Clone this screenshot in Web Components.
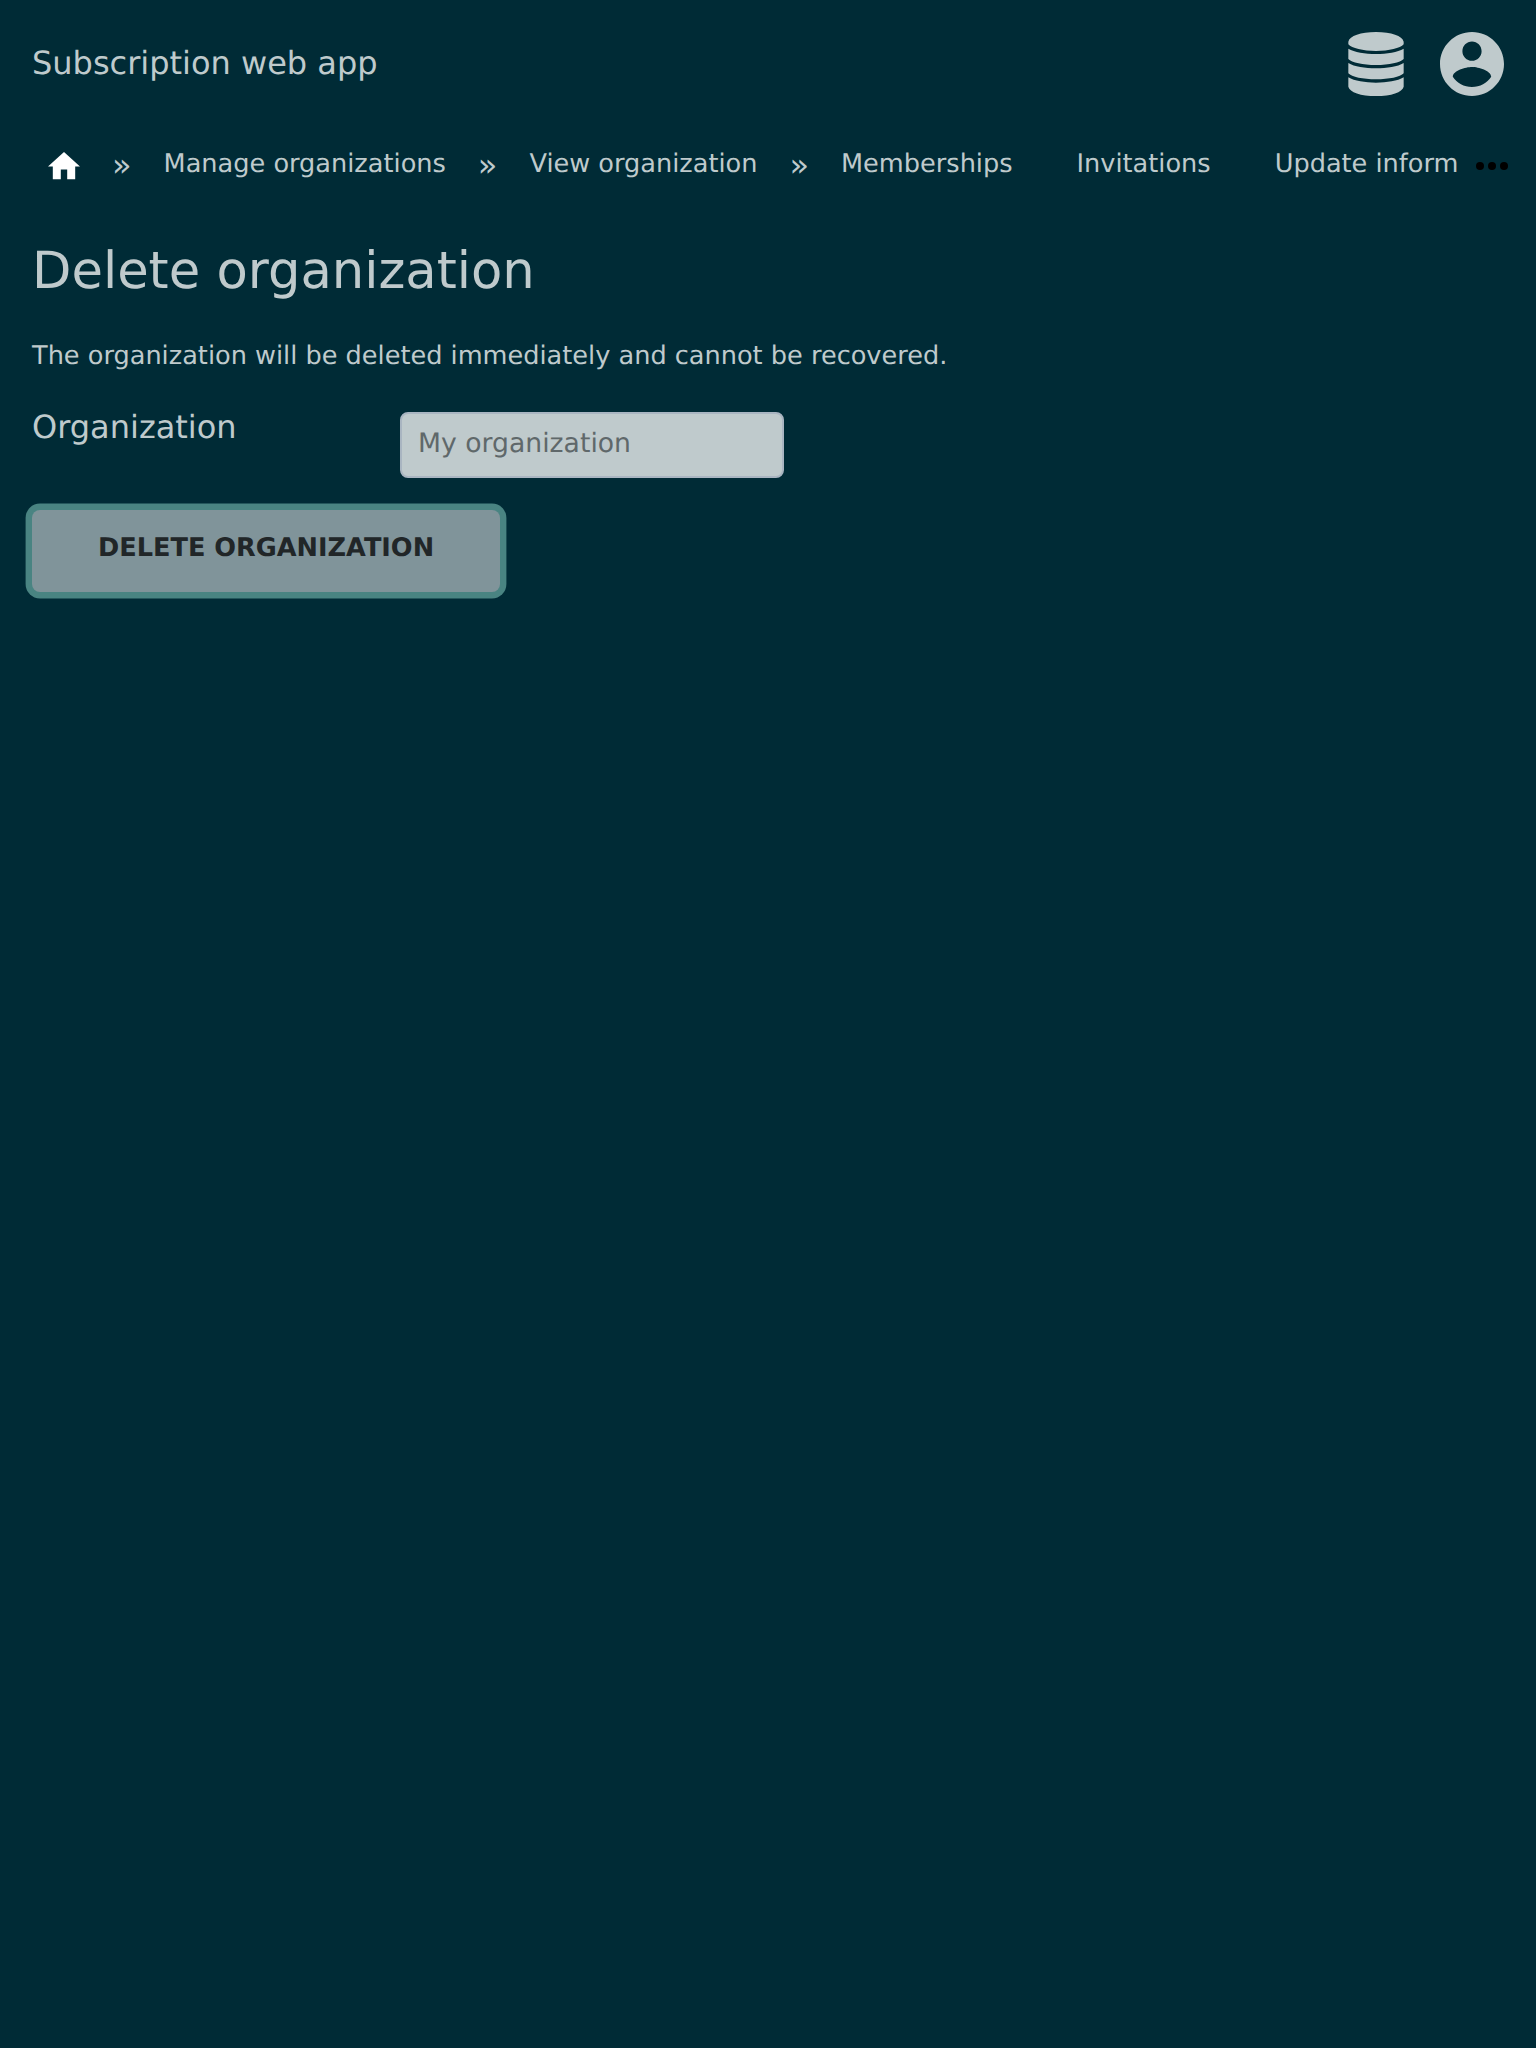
<!DOCTYPE html>
<html lang="en">
<head>
<meta charset="utf-8">
<title>Subscription web app</title>
<style>
html, body { margin: 0; background: #002b36; }
body { min-height: 2048px; font-family: "DejaVu Sans", sans-serif; font-size: 25.6px; color: #bfcacc; overflow: hidden; text-rendering: geometricPrecision; }
</style>
</head>
<body>
<app-page></app-page>
<script>
const define = (name, html) => customElements.define(name, class extends HTMLElement {
  constructor() {
    super();
    this.attachShadow({ mode: "open" }).innerHTML = html;
  }
});

define("app-header", `
<style>
:host { display: flex; align-items: center; gap: 36px; padding: 32px; height: 64px; }
.title { flex: 1; font-size: 32px; line-height: 62px; height: 64px; }
svg { display: block; fill: currentColor; }
</style>
<div class="title"><slot></slot></div>
<svg width="56" height="64" viewBox="0 0 168 192"><path d="M1 29C5 12 38 0 84 0s79 12 83 29v8c-10 12-44 20-83 20S11 49 1 37zM1 50c18 10 50 16 83 16s65-6 83-16v31c-10 11-44 18-83 18S11 92 1 81zM1 93c18 11 50 16 83 16s65-5 83-16v31c-10 11-44 18-83 18S11 135 1 124zM1 136c18 11 50 16 83 16s65-5 83-16v28c-4 17-37 28-83 28S5 181 1 164z"/></svg>
<svg width="64" height="64" viewBox="2 2 20 20"><path d="M12 2C6.48 2 2 6.48 2 12s4.48 10 10 10 10-4.48 10-10S17.52 2 12 2zm0 3c1.66 0 3 1.34 3 3s-1.34 3-3 3-3-1.34-3-3 1.34-3 3-3zm0 14.2c-2.5 0-4.71-1.28-6-3.22.03-1.99 4-3.08 6-3.08 1.99 0 5.97 1.09 6 3.08-1.29 1.94-3.5 3.22-6 3.22z"/></svg>
`);

define("nav-home", `
<style>:host { display: block; padding-top: 4px; } svg { display: block; fill: #fff; }</style>
<svg width="32" height="27.2" viewBox="2 3 20 17"><path d="M10 20v-6h4v6h5v-8h3L12 3 2 12h3v8z"/></svg>
`);

define("nav-separator", `
<style>:host { display: block; font-size: 32px; line-height: 42px; height: 40px; }</style>»
`);

define("nav-link", `
<style>:host { display: block; line-height: 40px; height: 40px; white-space: nowrap; } :host([spaced]) { margin-left: 32px; }</style><slot></slot>
`);

define("nav-bar", `
<style>
:host { display: flex; align-items: center; height: 40px; padding: 16px 28px 16px 48px; }
.items { flex: 1; min-width: 0; display: flex; align-items: center; gap: 32px; overflow: hidden; }
svg { display: block; margin-top: 4px; }
</style>
<div class="items"><slot></slot></div>
<svg width="32" height="8" viewBox="0 0 32 8"><circle cx="4" cy="4" r="4"/><circle cx="16" cy="4" r="4"/><circle cx="28" cy="4" r="4"/></svg>
`);

define("form-field", `
<style>
:host { display: flex; align-items: flex-start; }
label { width: 368px; font-size: 32px; line-height: 30px; }
.box { box-sizing: border-box; width: 384px; height: 66px; border: 2px solid #a9b5c1; border-radius: 8px; background: #bfcacc; color: #5f686a; padding-left: 16px; font-size: 26.667px; line-height: 60px; }
</style>
<label><slot name="label"></slot></label><div class="box"><slot></slot></div>
`);

define("app-button", `
<style>
:host { display: block; }
button { display: block; box-sizing: border-box; width: 468px; height: 82px; margin: 0; padding: 0 0 7px; border: 0; border-radius: 8px; background: #80949a; color: #212628; box-shadow: 0 0 0 6.4px #498482; font: bold 25.6px "DejaVu Sans", sans-serif; text-rendering: inherit; text-transform: uppercase; }
</style>
<button><slot></slot></button>
`);

define("app-page", `
<style>
:host { display: block; }
main { display: flex; flex-direction: column; padding: 41px 32px; }
h1 { margin: 0; font-size: 51.2px; font-weight: 400; line-height: 60px; }
p { margin: 39px 0 0; line-height: 32px; }
form-field { margin-top: 40px; }
form-field + app-button { margin-top: 32px; }
</style>
<app-header>Subscription web app</app-header>
<nav-bar>
<nav-home></nav-home><nav-separator></nav-separator>
<nav-link>Manage organizations</nav-link><nav-separator></nav-separator>
<nav-link>View organization</nav-link><nav-separator></nav-separator>
<nav-link>Memberships</nav-link><nav-link spaced>Invitations</nav-link><nav-link spaced>Update inform</nav-link>
</nav-bar>
<main>
<h1>Delete organization</h1>
<p>The organization will be deleted immediately and cannot be recovered.</p>
<form-field><span slot="label">Organization</span>My organization</form-field>
<app-button>Delete organization</app-button>
</main>
`);
</script>
</body>
</html>
